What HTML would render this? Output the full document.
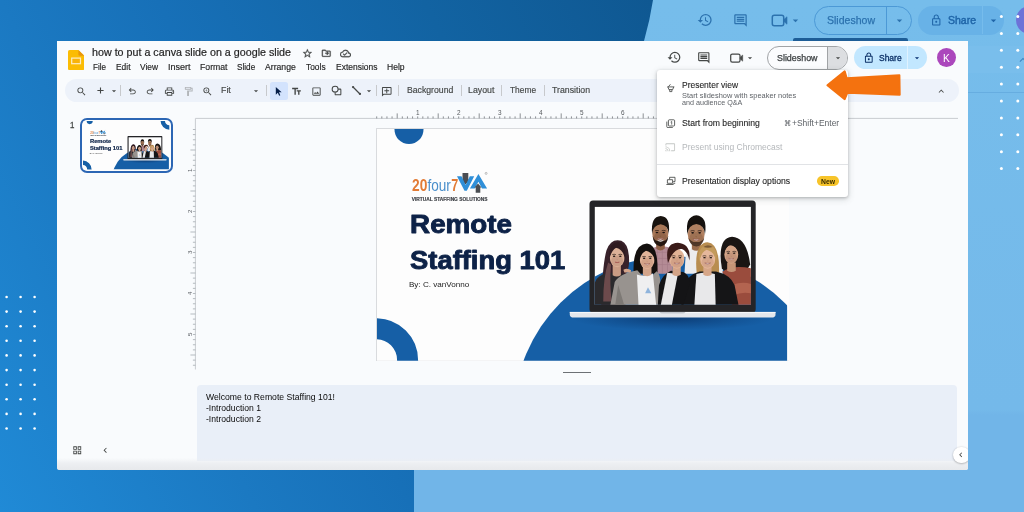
<!DOCTYPE html>
<html><head><meta charset="utf-8">
<style>
*{margin:0;padding:0;box-sizing:border-box}
html,body{width:1024px;height:512px;overflow:hidden}
body{position:relative;font-family:"Liberation Sans",sans-serif;background:#73b8ea;}
.abs{position:absolute}
.t{position:absolute;white-space:nowrap;line-height:1;transform-origin:0 0}
#bgl{left:0;top:0}
#win{left:56.6px;top:0;width:911.3px;height:470.4px;overflow:hidden;border-radius:0 0 2.5px 2.5px}#win>div#off{left:-56.6px;top:0;width:1024px;height:512px}
#winbg{left:56.6px;top:41px;width:912px;height:429.4px;background:#f9fbfd;border-radius:0 0 2.5px 2.5px}
</style></head><body><div class="abs" style="left:0;top:0;width:1024px;height:512px;will-change:transform">

<svg id="bgl" class="abs" width="1024" height="512" viewBox="0 0 1024 512">
<defs>
<linearGradient id="g1" gradientUnits="userSpaceOnUse" x1="0" y1="512" x2="724.8" y2="149.6"><stop offset="0" stop-color="#208ad6"/><stop offset="0.283" stop-color="#1b79c2"/><stop offset="0.457" stop-color="#1770b8"/><stop offset="0.75" stop-color="#1263a2"/><stop offset="1" stop-color="#0f5892"/></linearGradient>
<linearGradient id="g2" x1="0" y1="0" x2="0" y2="1"><stop offset="0" stop-color="#76bdeb"/><stop offset="0.8" stop-color="#74b9ea"/><stop offset="0.81" stop-color="#71b5e8"/><stop offset="1" stop-color="#71b5e8"/></linearGradient>
</defs>
<rect width="1024" height="512" fill="url(#g2)"/>
<path d="M0 0H653Q650 20 644 41L600 250L414 470V512H0Z" fill="url(#g1)"/>

</svg>

<div class="abs" style="left:967px;top:46px;width:80px;height:27px;background:#7fc1ed;opacity:.4"></div>
<div class="abs" style="left:967px;top:91.5px;width:57px;height:1px;background:#63a9dd;opacity:.8"></div>
<svg class="abs" style="left:1016.00px;top:53.00px" width="14" height="14" viewBox="0 0 24 24"><path fill="#3d86c0" d="M12 8l-6 6 1.410 1.410L12 10.830l4.590 4.580L18 14z" /></svg>
<svg class="abs" style="left:697.20px;top:12.20px" width="16" height="16" viewBox="0 0 24 24"><path fill="#2c72ae" d="M13 3a9 9 0 0 0-9 9H1l3.890 3.890.07.14L9 12H6c0-3.870 3.130-7 7-7s7 3.130 7 7-3.130 7-7 7c-1.930 0-3.680-.790-4.940-2.060l-1.420 1.420A8.954 8.954 0 0 0 13 21a9 9 0 0 0 0-18zm-1 5v5l4.250 2.520.770-1.280-3.520-2.090V8z" /></svg>
<svg class="abs" style="left:733.00px;top:13.10px" width="15" height="15" viewBox="0 0 24 24"><path fill="#2c72ae" d="M21.990 4c0-1.100-.890-2-1.990-2H4c-1.100 0-2 .900-2 2v12c0 1.100.900 2 2 2h14l4 4-.010-18zM20 4v13.170L18.830 16H4V4h16zM6 12h12v2H6zm0-3h12v2H6zm0-3h12v2H6z" /></svg>
<svg class="abs" style="left:770px;top:12px" width="20" height="17" viewBox="770 12 20 17"><rect x="772.300" y="15.200" width="11.400" height="10.600" rx="2" fill="none" stroke="#2c72ae" stroke-width="1.500"/><path d="M784 19.400L787 16.800V24.200L784 21.600Z" fill="#2c72ae" stroke="#2c72ae" stroke-width=".6" stroke-linejoin="round"/></svg>
<svg class="abs" style="left:789.00px;top:14.00px" width="13" height="13" viewBox="0 0 24 24"><path fill="#2c72ae" d="M7 10l5 5 5-5z" /></svg>
<div class="abs" style="left:814.4px;top:5.7px;width:97.4px;height:29px;border:1px solid #4c99d6;border-radius:14.5px"></div>
<div class="abs" style="left:886.2px;top:6px;width:1px;height:28.4px;background:#4c99d6"></div>
<span class="t" style="left:826.80px;top:15.00px;font-size:11px;color:#2c72ae;transform:scaleX(0.9573);-webkit-text-stroke:.25px #2c72ae;">Slideshow</span>
<svg class="abs" style="left:892.50px;top:14.00px" width="13" height="13" viewBox="0 0 24 24"><path fill="#2c72ae" d="M7 10l5 5 5-5z" /></svg>
<div class="abs" style="left:917.8px;top:5.7px;width:86.5px;height:29px;background:#68b2e7;border-radius:14.5px"></div>
<div class="abs" style="left:981.5px;top:6px;width:1px;height:28.4px;background:#76bcec"></div>
<svg class="abs" style="left:929.75px;top:13.75px" width="12.5" height="12.5" viewBox="0 0 24 24"><path fill="#1f65a8" d="M18 8h-1V6c0-2.760-2.240-5-5-5S7 3.240 7 6v2H6c-1.100 0-2 .900-2 2v10c0 1.100.900 2 2 2h12c1.100 0 2-.900 2-2V10c0-1.100-.900-2-2-2zM9 6c0-1.660 1.340-3 3-3s3 1.340 3 3v2H9V6zm9 14H6V10h12v10zm-6-3c1.100 0 2-.900 2-2s-.900-2-2-2-2 .900-2 2 .900 2 2 2z" /></svg>
<span class="t" style="left:947.70px;top:15.00px;font-size:11px;color:#1f65a8;transform:scaleX(0.9537);-webkit-text-stroke:.45px #1f65a8;">Share</span>
<svg class="abs" style="left:986.90px;top:14.00px" width="13" height="13" viewBox="0 0 24 24"><path fill="#1f65a8" d="M7 10l5 5 5-5z" /></svg>
<div class="abs" style="left:1016px;top:6px;width:28px;height:28px;border-radius:14px;background:#6d72d8"></div>
<div class="abs" style="left:792.5px;top:38px;width:115.2px;height:4px;background:#1d5d97;border-radius:2px 2px 0 0"></div>
<svg class="abs" style="left:0;top:0" width="1024" height="512"><g fill="#fff"><circle cx="6.6" cy="297.0" r="1.3"/><circle cx="20.6" cy="297.0" r="1.3"/><circle cx="34.6" cy="297.0" r="1.3"/><circle cx="6.6" cy="311.6" r="1.3"/><circle cx="20.6" cy="311.6" r="1.3"/><circle cx="34.6" cy="311.6" r="1.3"/><circle cx="6.6" cy="326.2" r="1.3"/><circle cx="20.6" cy="326.2" r="1.3"/><circle cx="34.6" cy="326.2" r="1.3"/><circle cx="6.6" cy="340.8" r="1.3"/><circle cx="20.6" cy="340.8" r="1.3"/><circle cx="34.6" cy="340.8" r="1.3"/><circle cx="6.6" cy="355.4" r="1.3"/><circle cx="20.6" cy="355.4" r="1.3"/><circle cx="34.6" cy="355.4" r="1.3"/><circle cx="6.6" cy="370.1" r="1.3"/><circle cx="20.6" cy="370.1" r="1.3"/><circle cx="34.6" cy="370.1" r="1.3"/><circle cx="6.6" cy="384.7" r="1.3"/><circle cx="20.6" cy="384.7" r="1.3"/><circle cx="34.6" cy="384.7" r="1.3"/><circle cx="6.6" cy="399.3" r="1.3"/><circle cx="20.6" cy="399.3" r="1.3"/><circle cx="34.6" cy="399.3" r="1.3"/><circle cx="6.6" cy="413.9" r="1.3"/><circle cx="20.6" cy="413.9" r="1.3"/><circle cx="34.6" cy="413.9" r="1.3"/><circle cx="6.6" cy="428.5" r="1.3"/><circle cx="20.6" cy="428.5" r="1.3"/><circle cx="34.6" cy="428.5" r="1.3"/><circle cx="1001.4" cy="16.5" r="1.5"/><circle cx="1017.8" cy="16.5" r="1.5"/><circle cx="1001.4" cy="33.4" r="1.5"/><circle cx="1017.8" cy="33.4" r="1.5"/><circle cx="1001.4" cy="50.3" r="1.5"/><circle cx="1017.8" cy="50.3" r="1.5"/><circle cx="1001.4" cy="67.2" r="1.5"/><circle cx="1017.8" cy="67.2" r="1.5"/><circle cx="1001.4" cy="84.1" r="1.5"/><circle cx="1017.8" cy="84.1" r="1.5"/><circle cx="1001.4" cy="101.0" r="1.5"/><circle cx="1017.8" cy="101.0" r="1.5"/><circle cx="1001.4" cy="117.9" r="1.5"/><circle cx="1017.8" cy="117.9" r="1.5"/><circle cx="1001.4" cy="134.8" r="1.5"/><circle cx="1017.8" cy="134.8" r="1.5"/><circle cx="1001.4" cy="151.7" r="1.5"/><circle cx="1017.8" cy="151.7" r="1.5"/><circle cx="1001.4" cy="168.6" r="1.5"/><circle cx="1017.8" cy="168.6" r="1.5"/></g></svg>
<div id="win" class="abs"><div id="off" class="abs"><div id="winbg" class="abs"></div>

<svg class="abs" style="left:68px;top:49.6px" width="16.2" height="20.2" viewBox="0 0 16.2 20.2"><path d="M1.6 0H10.4L16.2 5.8V18.600Q16.200 20.200 14.600 20.200H1.600Q0 20.200 0 18.600V1.600Q0 0 1.600 0Z" fill="#fbbc04"/><path d="M10.400 0L16.200 5.800H11.800Q10.400 5.800 10.400 4.400Z" fill="#e8960c"/><rect x="3.700" y="8.100" width="8.800" height="5.600" fill="#f9b30a" stroke="#fdebc0" stroke-width="1.250"/></svg>
<span class="t" style="left:91.90px;top:47.00px;font-size:10.8px;color:#1f1f1f;transform:scaleX(0.9926);-webkit-text-stroke:.2px #1f1f1f;">how to put a canva slide on a google slide</span>
<svg class="abs" style="left:302.00px;top:47.90px" width="10.8" height="10.8" viewBox="0 0 24 24"><path fill="#444746" d="M22 9.240l-7.190-.620L12 2 9.190 8.630 2 9.240l5.460 4.730L5.820 21 12 17.270 18.180 21l-1.630-7.030L22 9.240zM12 15.400l-3.760 2.270 1-4.280-3.320-2.880 4.380-.380L12 6.100l1.710 4.040 4.380.380-3.320 2.880 1 4.280L12 15.400z" stroke="#444746" stroke-width=".7"/></svg><svg class="abs" style="left:321.25px;top:48.35px" width="10.5" height="10.5" viewBox="0 0 24 24"><path fill="#444746" d="M20 6h-8l-2-2H4c-1.100 0-2 .900-2 2v12c0 1.100.900 2 2 2h16c1.100 0 2-.900 2-2V8c0-1.100-.900-2-2-2zm0 12H4V6h5.170l2 2H20v10zm-7.160-3.410L14.250 16l4-4-4-4-1.410 1.410L14.420 11H10v2h4.420l-1.580 1.590z" stroke="#444746" stroke-width=".7"/></svg><svg class="abs" style="left:340.20px;top:48.10px" width="11" height="11" viewBox="0 0 24 24"><path fill="#444746" d="M19.350 10.040A7.490 7.490 0 0 0 12 4C9.110 4 6.600 5.640 5.350 8.040A5.994 5.994 0 0 0 0 14c0 3.310 2.690 6 6 6h13c2.760 0 5-2.240 5-5 0-2.640-2.050-4.780-4.650-4.960zM19 18H6c-2.210 0-4-1.790-4-4 0-2.050 1.530-3.760 3.560-3.970l1.070-.110.500-.950A5.469 5.469 0 0 1 12 6c2.620 0 4.880 1.860 5.390 4.430l.300 1.500 1.530.110A2.980 2.980 0 0 1 22 15c0 1.650-1.350 3-3 3zm-9-3.820l-2.090-2.090L6.500 13.500 10 17l6.010-6.010-1.410-1.410z" stroke="#444746" stroke-width=".6"/></svg>
<span class="t" style="left:92.70px;top:64.00px;font-size:8.2px;color:#1f1f1f;transform:scaleX(0.9846);-webkit-text-stroke:.15px #1f1f1f;">File</span>
<span class="t" style="left:115.50px;top:64.00px;font-size:8.2px;color:#1f1f1f;transform:scaleX(1.0277);-webkit-text-stroke:.15px #1f1f1f;">Edit</span>
<span class="t" style="left:140.00px;top:64.00px;font-size:8.2px;color:#1f1f1f;transform:scaleX(1.0222);-webkit-text-stroke:.15px #1f1f1f;">View</span>
<span class="t" style="left:167.60px;top:64.00px;font-size:8.2px;color:#1f1f1f;transform:scaleX(1.0984);-webkit-text-stroke:.15px #1f1f1f;">Insert</span>
<span class="t" style="left:199.60px;top:64.00px;font-size:8.2px;color:#1f1f1f;transform:scaleX(1.0602);-webkit-text-stroke:.15px #1f1f1f;">Format</span>
<span class="t" style="left:236.80px;top:64.00px;font-size:8.2px;color:#1f1f1f;transform:scaleX(0.9990);-webkit-text-stroke:.15px #1f1f1f;">Slide</span>
<span class="t" style="left:265.20px;top:64.00px;font-size:8.2px;color:#1f1f1f;transform:scaleX(1.0569);-webkit-text-stroke:.15px #1f1f1f;">Arrange</span>
<span class="t" style="left:306.20px;top:64.00px;font-size:8.2px;color:#1f1f1f;transform:scaleX(1.0248);-webkit-text-stroke:.15px #1f1f1f;">Tools</span>
<span class="t" style="left:335.50px;top:64.00px;font-size:8.2px;color:#1f1f1f;transform:scaleX(1.0359);-webkit-text-stroke:.15px #1f1f1f;">Extensions</span>
<span class="t" style="left:386.70px;top:64.00px;font-size:8.2px;color:#1f1f1f;transform:scaleX(1.0449);-webkit-text-stroke:.15px #1f1f1f;">Help</span>
<svg class="abs" style="left:667.30px;top:50.40px" width="14.6" height="14.6" viewBox="0 0 24 24"><path fill="#444746" d="M13 3a9 9 0 0 0-9 9H1l3.890 3.890.07.14L9 12H6c0-3.870 3.130-7 7-7s7 3.130 7 7-3.130 7-7 7c-1.930 0-3.680-.790-4.940-2.060l-1.420 1.420A8.954 8.954 0 0 0 13 21a9 9 0 0 0 0-18zm-1 5v5l4.250 2.520.770-1.280-3.520-2.090V8z" /></svg>
<svg class="abs" style="left:697.30px;top:50.90px" width="13.6" height="13.6" viewBox="0 0 24 24"><path fill="#444746" d="M21.990 4c0-1.100-.890-2-1.990-2H4c-1.100 0-2 .900-2 2v12c0 1.100.900 2 2 2h14l4 4-.010-18zM20 4v13.170L18.830 16H4V4h16zM6 12h12v2H6zm0-3h12v2H6zm0-3h12v2H6z" /></svg>
<svg class="abs" style="left:729px;top:52px" width="15" height="12" viewBox="729 52 15 12"><rect x="730.700" y="54" width="9.300" height="8.200" rx="1.600" fill="none" stroke="#444746" stroke-width="1.250"/><path d="M740.200 57.200L742.700 55V61.200L740.200 59Z" fill="#444746" stroke="#444746" stroke-width=".5" stroke-linejoin="round"/></svg>
<svg class="abs" style="left:745.40px;top:53.00px" width="10" height="10" viewBox="0 0 24 24"><path fill="#444746" d="M7 10l5 5 5-5z" /></svg>
<div class="abs" style="left:766.6px;top:45.7px;width:81.8px;height:24px;border:1px solid #a0a3a6;border-radius:12px;overflow:hidden;background:#fbfcfe"><div class="abs" style="left:59.300px;top:0;width:22px;height:24px;background:#dcdee1;border-left:1px solid #a0a3a6"></div></div>
<span class="t" style="left:776.70px;top:54.00px;font-size:8.4px;color:#3c4043;transform:scaleX(1.0606);-webkit-text-stroke:.25px #3c4043;">Slideshow</span>
<svg class="abs" style="left:833.00px;top:52.80px" width="10" height="10" viewBox="0 0 24 24"><path fill="#444746" d="M7 10l5 5 5-5z" /></svg>
<div class="abs" style="left:853.8px;top:46.2px;width:73.4px;height:23px;background:#c2e7ff;border-radius:11.5px"></div>
<div class="abs" style="left:907.3px;top:46.2px;width:1px;height:23px;background:#dff2ff"></div>
<svg class="abs" style="left:863.10px;top:51.60px" width="11.6" height="11.6" viewBox="0 0 24 24"><path fill="#0a2f66" d="M18 8h-1V6c0-2.760-2.240-5-5-5S7 3.240 7 6v2H6c-1.100 0-2 .900-2 2v10c0 1.100.900 2 2 2h12c1.100 0 2-.900 2-2V10c0-1.100-.900-2-2-2zM9 6c0-1.660 1.340-3 3-3s3 1.340 3 3v2H9V6zm9 14H6V10h12v10zm-6-3c1.100 0 2-.900 2-2s-.900-2-2-2-2 .900-2 2 .900 2 2 2z" /></svg>
<span class="t" style="left:879.30px;top:54.00px;font-size:8.4px;color:#0a2f66;transform:scaleX(1.0108);-webkit-text-stroke:.3px #0a2f66;">Share</span>
<svg class="abs" style="left:912.20px;top:52.80px" width="10" height="10" viewBox="0 0 24 24"><path fill="#062e6f" d="M7 10l5 5 5-5z" /></svg>
<div class="abs" style="left:936.8px;top:48.4px;width:18.8px;height:18.8px;border-radius:50%;background:#ab47bc"></div>
<span class="t" style="left:942.80px;top:53.00px;font-size:10.5px;color:#fff;transform:scaleX(0.9693);">K</span>

<div class="abs" style="left:65.2px;top:78.9px;width:893.4px;height:23.5px;border-radius:11.75px;background:#edf2fa"></div>
<svg class="abs" style="left:75.50px;top:85.60px" width="11" height="11" viewBox="0 0 24 24"><path fill="#444746" d="M15.5 14h-.79l-.28-.27A6.471 6.471 0 0 0 16 9.5 6.5 6.5 0 1 0 9.5 16c1.61 0 3.09-.59 4.23-1.57l.27.28v.79l5 4.99L20.49 19l-4.99-5zm-6 0C7.01 14 5 11.99 5 9.5S7.01 5 9.5 5 14 7.01 14 9.5 11.99 14 9.5 14z" /></svg><svg class="abs" style="left:97.300px;top:87.300px" width="7" height="7" viewBox="0 0 7 7"><path d="M3.500 0.400V6.600M0.400 3.500H6.600" stroke="#444746" stroke-width="1.100"/></svg><svg class="abs" style="left:109.10px;top:86.10px" width="10" height="10" viewBox="0 0 24 24"><path fill="#444746" d="M7 10l5 5 5-5z" /></svg><div class="abs" style="left:120.0px;top:84.5px;width:1px;height:11.5px;background:#c7c9cc"></div>
<svg class="abs" style="left:126.55px;top:85.85px" width="10.5" height="10.5" viewBox="0 0 24 24"><path fill="#444746" d="M7 19v-2h7.1q1.575 0 2.738-1T18 13.5 16.838 11 14.1 10H7.8l2.6 2.6L9 14 4 9l5-5 1.4 1.4L7.8 8h6.3q2.425 0 4.163 1.575T20 13.5t-1.737 3.925T14.1 19z" /></svg><svg class="abs" style="left:145.25px;top:85.85px" width="10.5" height="10.5" viewBox="0 0 24 24"><path fill="#444746" d="M17 19v-2H9.9q-1.575 0-2.738-1T6 13.5 7.162 11 9.9 10h6.3l-2.600 2.600L15 14l5-5-5-5-1.400 1.400L16.200 8H9.900Q7.475 8 5.737 9.575T4 13.500t1.737 3.925T9.900 19z" /></svg><svg class="abs" style="left:164.30px;top:85.60px" width="11" height="11" viewBox="0 0 24 24"><path fill="#444746" d="M19 8h-1V3H6v5H5c-1.660 0-3 1.340-3 3v6h4v4h12v-4h4v-6c0-1.660-1.340-3-3-3zM8 5h8v3H8V5zm8 14H8v-4h8v4zm2-4v-2H6v2H4v-4c0-.550.450-1 1-1h14c.550 0 1 .450 1 1v4h-2z M17 11.500a1 1 0 1 0 2 0 1 1 0 1 0-2 0z" /></svg><svg class="abs" style="left:182.50px;top:85.60px" width="11" height="11" viewBox="0 0 24 24"><path fill="#b0b3b7" d="M18 4V3c0-.55-.45-1-1-1H5c-.55 0-1 .45-1 1v4c0 .55.45 1 1 1h12c.55 0 1-.45 1-1V6h1v4H9v11c0 .55.45 1 1 1h2c.55 0 1-.45 1-1v-9h8V4h-3zM16 6H6V4h10v2z" /></svg><svg class="abs" style="left:202.10px;top:85.60px" width="11" height="11" viewBox="0 0 24 24"><path fill="#444746" d="M15.5 14h-.79l-.28-.27A6.471 6.471 0 0 0 16 9.5 6.5 6.5 0 1 0 9.5 16c1.61 0 3.09-.59 4.23-1.57l.27.28v.79l5 4.99L20.49 19l-4.99-5zm-6 0C7.01 14 5 11.99 5 9.5S7.01 5 9.5 5 14 7.01 14 9.5 11.99 14 9.5 14zM12 10h-2v2H9v-2H7V9h2V7h1v2h2v1z" /></svg>
<span class="t" style="left:220.70px;top:87.00px;font-size:8.2px;color:#444746;transform:scaleX(1.0758);-webkit-text-stroke:.15px #444746;">Fit</span><svg class="abs" style="left:251.30px;top:86.10px" width="10" height="10" viewBox="0 0 24 24"><path fill="#444746" d="M7 10l5 5 5-5z" /></svg><div class="abs" style="left:265.9px;top:84.5px;width:1px;height:11.5px;background:#c7c9cc"></div>
<div class="abs" style="left:269.9px;top:82.2px;width:17.7px;height:17.4px;background:#d3e3fd;border-radius:2.5px"></div>
<svg class="abs" style="left:273.40px;top:86.20px" width="10.4" height="10.4" viewBox="0 0 24 24"><path fill="#041e49" d="M6.500 2.500v17.500l4.600-4.400 3.100 6.900 2.700-1.200-3.100-6.800h6.200z" /></svg><svg class="abs" style="left:291.30px;top:85.60px" width="11" height="11" viewBox="0 0 24 24"><path fill="#444746" d="M2.5 4v3h5v12h3V7h5V4h-13zm19 5h-9v3h3v7h3v-7h3V9z" /></svg><svg class="abs" style="left:310.80px;top:85.60px" width="11" height="11" viewBox="0 0 24 24"><path fill="#444746" d="M19 5v14H5V5h14m0-2H5c-1.1 0-2 .9-2 2v14c0 1.100.900 2 2 2h14c1.100 0 2-.900 2-2V5c0-1.100-.900-2-2-2zm-4.860 8.860l-3 3.870L9 13.140 6 17h12l-3.860-5.140z" /></svg>
<svg class="abs" style="left:331.3px;top:85.3px" width="11" height="11" viewBox="0 0 24 24"><circle cx="9" cy="9" r="6.500" fill="none" stroke="#444746" stroke-width="2.200"/><path d="M15.500 9H20Q21.500 9 21.500 10.500V20Q21.500 21.500 20 21.500H10.500Q9 21.500 9 20V15.500" fill="none" stroke="#444746" stroke-width="2.200"/></svg>
<svg class="abs" style="left:350.7px;top:85.3px" width="11" height="11" viewBox="0 0 24 24"><path d="M5 5L19 19" stroke="#444746" stroke-width="2.600"/><circle cx="4.500" cy="4.500" r="2.500" fill="#444746"/><circle cx="19.500" cy="19.500" r="2.500" fill="#444746"/></svg>
<svg class="abs" style="left:364.10px;top:86.10px" width="10" height="10" viewBox="0 0 24 24"><path fill="#444746" d="M7 10l5 5 5-5z" /></svg><div class="abs" style="left:375.6px;top:84.5px;width:1px;height:11.5px;background:#c7c9cc"></div><svg class="abs" style="left:381.25px;top:85.65px" width="11.5" height="11.5" viewBox="0 0 24 24"><path fill="#444746" d="M22 4c0-1.100-.900-2-2-2H4c-1.100 0-2 .900-2 2v12c0 1.100.900 2 2 2h14l4 4V4zm-2 13.170L18.830 16H4V4h16v13.170zM13 5h-2v4H7v2h4v4h2v-4h4V9h-4z" transform="translate(24 0) scale(-1 1)"/></svg><div class="abs" style="left:397.9px;top:84.5px;width:1px;height:11.5px;background:#c7c9cc"></div>
<span class="t" style="left:406.90px;top:87.00px;font-size:8.2px;color:#444746;transform:scaleX(1.0594);-webkit-text-stroke:.15px #444746;">Background</span><div class="abs" style="left:460.9px;top:84.5px;width:1px;height:11.5px;background:#c7c9cc"></div>
<span class="t" style="left:468.40px;top:87.00px;font-size:8.2px;color:#444746;transform:scaleX(1.0734);-webkit-text-stroke:.15px #444746;">Layout</span><div class="abs" style="left:501.0px;top:84.5px;width:1px;height:11.5px;background:#c7c9cc"></div>
<span class="t" style="left:509.70px;top:87.00px;font-size:8.2px;color:#444746;transform:scaleX(1.0242);-webkit-text-stroke:.15px #444746;">Theme</span><div class="abs" style="left:544.1px;top:84.5px;width:1px;height:11.5px;background:#c7c9cc"></div>
<span class="t" style="left:552.20px;top:87.00px;font-size:8.2px;color:#444746;transform:scaleX(1.0685);-webkit-text-stroke:.15px #444746;">Transition</span>
<svg class="abs" style="left:936.45px;top:85.75px" width="10.5" height="10.5" viewBox="0 0 24 24"><path fill="#444746" d="M12 8l-6 6 1.410 1.410L12 10.830l4.590 4.580L18 14z" /></svg>

<span class="t" style="left:70.40px;top:121.00px;font-size:8.8px;color:#444746;transform:scaleX(0.8968);-webkit-text-stroke:.3px #444746;">1</span>
<div class="abs" style="left:80px;top:118.4px;width:93px;height:54.4px;border:2px solid #2c66b4;border-radius:7px;background:#fdfdfd;overflow:hidden">
<svg class="abs" style="left:1.3px;top:0.7px" width="86.3" height="48.5" viewBox="376.5 129 412 231.75" preserveAspectRatio="none">
<defs><clipPath id="tc"><rect x="376.5" y="129" width="412" height="231.75"/></clipPath>
<clipPath id="tb"><rect x="500" y="250" width="286.600" height="111"/></clipPath>
<clipPath id="ts"><rect x="594.3" y="206.9" width="156.1" height="97.800"/></clipPath>
<radialGradient id="tsh" cx="0.5" cy="0.5" r="0.5"><stop offset="0" stop-color="#0b3a72" stop-opacity=".9"/><stop offset="1" stop-color="#0c3f7a" stop-opacity="0"/></radialGradient></defs>
<rect x="376.5" y="129" width="412" height="231.75" fill="#fdfdfd"/>
<g clip-path="url(#tc)">
<circle cx="408.5" cy="129.5" r="14.5" fill="#165fa6"/>
<circle cx="375.600" cy="360.200" r="31.500" fill="none" stroke="#165fa6" stroke-width="21"/>
<circle cx="789" cy="128.500" r="31.500" fill="none" stroke="#165fa6" stroke-width="21"/>
<path d="M513 361V256H786.600V361Z" fill="none"/><g clip-path="url(#tb)"><circle cx="672" cy="414.7" r="158.4" fill="#165fa6"/>
<ellipse cx="672" cy="318.500" rx="100" ry="12" fill="url(#tsh)"/></g>
</g>

<rect x="589" y="200.400" width="166.200" height="112" rx="3.500" fill="#242427"/>
<rect x="594.300" y="206.900" width="156.100" height="97.800" fill="#fff"/>
<g clip-path="url(#ts)">
<circle cx="672" cy="414.700" r="158.400" fill="#165fa6"/>
<g transform="translate(590 203) scale(0.2053)">
<!-- man 1 -->
<path d="M298 222Q340 200 398 222L400 345H310Z" fill="#b48b95"/>
<path d="M310 240H398M310 270H398M310 300H398M325 215V345M350 215V345M375 215V345" stroke="#9a6f7c" stroke-width="3" opacity=".6"/>
<path d="M320 185H362V222Q340 240 320 222Z" fill="#8f6146"/>
<ellipse cx="340" cy="150" rx="39" ry="52" fill="#a87757"/><ellipse cx="340" cy="168.2" rx="31.200000000000003" ry="28.6" fill="#6b4630" opacity=".35"/><ellipse cx="323.62" cy="143.76" rx="6.630000000000001" ry="3.6400000000000006" fill="#1d1412"/><ellipse cx="356.38" cy="143.76" rx="6.630000000000001" ry="3.6400000000000006" fill="#1d1412"/><path d="M313.87 135.44Q323.62 131.28 333.37 135.44M346.63 135.44Q356.38 131.28 366.13 135.44" stroke="#2a1c16" stroke-width="3.51" fill="none"/><path d="M325.18 171.84Q340 187.44 354.82 171.84Q340 176.0 325.18 171.84Z" fill="#f4efec" stroke="#8e4a44" stroke-width="2.34"/><path d="M336.88 160.4Q340 164.04 343.9 160.4" stroke="#6b4630" stroke-width="2.7300000000000004" fill="none" opacity=".7"/>
<path d="M300 150Q292 66 342 63Q392 66 381 150Q378 108 342 104Q306 108 300 150Z" fill="#18130f"/>
<path d="M303 160Q306 208 341 212Q376 208 379 160Q370 186 356 184Q341 178 326 184Q312 186 303 160Z" fill="#241710"/>
<path d="M322 178Q341 200 360 178Q341 188 322 178Z" fill="#efe9e4"/>
<!-- woman 1 -->
<path d="M52 500Q58 300 78 230Q100 170 150 184Q190 200 188 290Q186 340 160 360L150 500Z" fill="#38222a"/>
<path d="M20 500V390Q30 350 90 340L160 345Q180 360 170 500Z" fill="#2b2a2d"/>
<path d="M108 300H148V352Q128 365 108 352Z" fill="#c99c84"/>
<ellipse cx="130" cy="265" rx="36" ry="48" fill="#dcb198"/><ellipse cx="130" cy="281.8" rx="28.8" ry="26.400000000000002" fill="#a97b66" opacity=".35"/><ellipse cx="114.88" cy="259.24" rx="6.12" ry="3.3600000000000003" fill="#1d1412"/><ellipse cx="145.12" cy="259.24" rx="6.12" ry="3.3600000000000003" fill="#1d1412"/><path d="M105.88 251.56Q114.88 247.72 123.88 251.56M136.12 251.56Q145.12 247.72 154.12 251.56" stroke="#2a1c16" stroke-width="3.2399999999999998" fill="none"/><path d="M119.2 288.04Q130 291.88 140.8 288.04" stroke="#a0504c" stroke-width="4.32" fill="none"/><path d="M127.12 274.6Q130 277.96 133.6 274.6" stroke="#a97b66" stroke-width="2.5200000000000005" fill="none" opacity=".7"/>
<path d="M92 275Q82 195 135 190Q180 196 168 275Q160 225 125 218Q100 232 92 275Z" fill="#2f1b20"/>
<path d="M62 480Q62 360 86 290L100 300Q92 400 104 480Z" fill="#6c4a4c"/>
<!-- woman 2 -->
<path d="M210 345Q204 200 275 197Q332 202 326 345Z" fill="#14100e"/>
<path d="M96 500L118 385Q140 345 228 328L250 352H302L322 332Q338 345 340 380V500Z" fill="#98938f"/>
<path d="M120 500L135 400L165 500Z" fill="#7d7975"/>
<path d="M226 348Q265 362 304 344L320 500H234Z" fill="#efeff0"/>
<path d="M280 410L296 440H266Z" fill="#8fb4dc"/>
<path d="M255 312H297V350Q276 364 255 350Z" fill="#d3a58b"/>
<ellipse cx="276" cy="275" rx="36" ry="47" fill="#e2b499"/><ellipse cx="276" cy="291.45" rx="28.8" ry="25.85" fill="#b5826b" opacity=".35"/><ellipse cx="260.88" cy="269.36" rx="6.12" ry="3.2900000000000005" fill="#1d1412"/><ellipse cx="291.12" cy="269.36" rx="6.12" ry="3.2900000000000005" fill="#1d1412"/><path d="M251.88 261.84Q260.88 258.08 269.88 261.84M282.12 261.84Q291.12 258.08 300.12 261.84" stroke="#2a1c16" stroke-width="3.2399999999999998" fill="none"/><path d="M262.32 294.74Q276 308.84 289.68 294.74Q276 298.5 262.32 294.74Z" fill="#f4efec" stroke="#8e4a44" stroke-width="2.16"/><path d="M273.12 284.4Q276 287.69 279.6 284.4" stroke="#b5826b" stroke-width="2.5200000000000005" fill="none" opacity=".7"/>
<path d="M238 285Q228 212 278 210Q322 214 314 285Q308 240 270 232Q244 244 238 285Z" fill="#14100e"/>
<path d="M160 325Q180 315 198 328L195 338H165Z" fill="#d3a58b"/>
</g>
<g transform="translate(670 203) scale(0.2053)">
<!-- man 2 -->
<path d="M68 345L74 250Q92 222 125 215Q160 220 185 238L255 262V345Z" fill="#ececee"/>
<path d="M104 188H148V225Q126 240 104 225Z" fill="#9a6c4c"/>
<ellipse cx="125" cy="152" rx="41" ry="55" fill="#b18161"/><ellipse cx="125" cy="171.25" rx="32.800000000000004" ry="30.250000000000004" fill="#7a5238" opacity=".35"/><ellipse cx="107.78" cy="145.4" rx="6.970000000000001" ry="3.8500000000000005" fill="#1d1412"/><ellipse cx="142.22" cy="145.4" rx="6.970000000000001" ry="3.8500000000000005" fill="#1d1412"/><path d="M97.53 136.6Q107.78 132.2 118.03 136.6M131.97 136.6Q142.22 132.2 152.47 136.6" stroke="#2a1c16" stroke-width="3.69" fill="none"/><path d="M109.42 175.1Q125 191.6 140.58 175.1Q125 179.5 109.42 175.1Z" fill="#f4efec" stroke="#8e4a44" stroke-width="2.46"/><path d="M121.72 163.0Q125 166.85 129.1 163.0" stroke="#7a5238" stroke-width="2.87" fill="none" opacity=".7"/>
<path d="M82 152Q70 66 126 60Q182 66 168 152Q166 108 126 102Q88 106 82 152Z" fill="#15110e"/>
<path d="M88 170Q94 208 126 212Q158 208 164 170Q150 192 126 190Q102 192 88 170Z" fill="#3b281c" opacity=".8"/>
<!-- woman 5 -->
<path d="M250 318Q226 170 300 164Q372 168 388 300L370 330H262Z" fill="#1a1513"/>
<path d="M252 335Q300 300 392 318V500H300Q290 400 252 335Z" fill="#9a4c3d"/>
<path d="M300 400Q350 380 392 395V440Q350 430 305 450Z" fill="#b36450"/>
<path d="M276 290H318V330Q297 342 276 330Z" fill="#c59476"/>
<ellipse cx="296" cy="250" rx="34" ry="46" fill="#d4a487"/><ellipse cx="296" cy="266.1" rx="27.200000000000003" ry="25.3" fill="#a57860" opacity=".35"/><ellipse cx="281.72" cy="244.48" rx="5.78" ry="3.22" fill="#1d1412"/><ellipse cx="310.28" cy="244.48" rx="5.78" ry="3.22" fill="#1d1412"/><path d="M273.22 237.12Q281.72 233.44 290.22 237.12M301.78 237.12Q310.28 233.44 318.78 237.12" stroke="#2a1c16" stroke-width="3.06" fill="none"/><path d="M283.08 269.32Q296 283.12 308.92 269.32Q296 273.0 283.08 269.32Z" fill="#f4efec" stroke="#8e4a44" stroke-width="2.04"/><path d="M293.28 259.2Q296 262.42 299.4 259.2" stroke="#a57860" stroke-width="2.3800000000000003" fill="none" opacity=".7"/>
<path d="M260 252Q254 182 300 180Q340 186 334 250Q322 206 288 204Q266 216 260 252Z" fill="#1a1513"/>
<path d="M268 238H290M302 238H324" stroke="#6b5a50" stroke-width="2.500" opacity=".7"/>
<!-- woman 4 -->
<path d="M128 345Q112 196 180 191Q242 196 236 345Z" fill="#b88d50"/>
<path d="M52 500L68 400Q86 350 142 334H222Q292 350 312 400L332 500Z" fill="#151517"/>
<path d="M126 346Q170 330 216 346L220 500H116Z" fill="#e8e8ea"/>
<path d="M160 312H200V350Q180 362 160 350Z" fill="#d6a688"/>
<ellipse cx="181" cy="272" rx="37" ry="48" fill="#e5b79b"/><ellipse cx="181" cy="288.8" rx="29.6" ry="26.400000000000002" fill="#b8866d" opacity=".35"/><ellipse cx="165.46" cy="266.24" rx="6.29" ry="3.3600000000000003" fill="#1d1412"/><ellipse cx="196.54" cy="266.24" rx="6.29" ry="3.3600000000000003" fill="#1d1412"/><path d="M156.21 258.56Q165.46 254.72 174.71 258.56M187.29 258.56Q196.54 254.72 205.79 258.56" stroke="#2a1c16" stroke-width="3.33" fill="none"/><path d="M166.94 292.16Q181 306.56 195.06 292.16Q181 296.0 166.94 292.16Z" fill="#f4efec" stroke="#8e4a44" stroke-width="2.2199999999999998"/><path d="M178.04 281.6Q181 284.96 184.7 281.6" stroke="#b8866d" stroke-width="2.5900000000000003" fill="none" opacity=".7"/>
<path d="M140 290Q126 210 182 204Q236 210 222 290Q218 238 176 228Q148 240 140 290Z" fill="#c39a5c"/>
<path d="M160 214Q182 198 206 214Q182 222 160 214Z" fill="#7a5a36"/>
<!-- woman 3 -->
<path d="M-62 500L-56 400Q-40 348 2 330L62 336Q98 352 92 400L62 500Z" fill="#141416"/>
<path d="M-16 340L36 346L6 500H-48Z" fill="#e9e9ea"/>
<path d="M10 312H50V350Q30 362 10 350Z" fill="#d3a488"/>
<ellipse cx="31" cy="272" rx="37" ry="48" fill="#e2b396"/><ellipse cx="31" cy="288.8" rx="29.6" ry="26.400000000000002" fill="#b4826b" opacity=".35"/><ellipse cx="15.46" cy="266.24" rx="6.29" ry="3.3600000000000003" fill="#1d1412"/><ellipse cx="46.54" cy="266.24" rx="6.29" ry="3.3600000000000003" fill="#1d1412"/><path d="M6.210000000000001 258.56Q15.46 254.72 24.71 258.56M37.29 258.56Q46.54 254.72 55.79 258.56" stroke="#2a1c16" stroke-width="3.33" fill="none"/><path d="M16.939999999999998 292.16Q31 306.56 45.06 292.16Q31 296.0 16.939999999999998 292.16Z" fill="#f4efec" stroke="#8e4a44" stroke-width="2.2199999999999998"/><path d="M28.04 281.6Q31 284.96 34.7 281.6" stroke="#b4826b" stroke-width="2.5900000000000003" fill="none" opacity=".7"/>
<path d="M-12 292Q-32 196 36 194Q102 200 92 280Q84 236 56 224Q16 218 -12 292Z" fill="#3a1b18"/>
</g>
</g>
<path d="M569.300 311.900H775V314.800Q775 317.600 771 317.600H573.300Q569.300 317.600 569.300 314.800Z" fill="#e4e7ec"/>
<rect x="569.300" y="311.900" width="205.700" height="1.200" fill="#f6f7f9"/>
<path d="M659 311.900H685Q684 313.600 682 313.600H662Q660 313.600 659 311.900Z" fill="#c3c7cd"/>


<g font-family="Liberation Sans" >
<text x="411.5" y="190.5" font-size="16.4" font-weight="700" fill="#e27b35" textLength="15.3" lengthAdjust="spacingAndGlyphs">20</text>
<text x="427" y="190.5" font-size="16.4" fill="#4a8fcb" textLength="23.4" lengthAdjust="spacingAndGlyphs">four</text>
<text x="450.8" y="190.5" font-size="16.4" font-weight="700" fill="#e27b35" textLength="7" lengthAdjust="spacingAndGlyphs">7</text>
<path d="M462 173H467.800V179.500H470L464.900 184.500 459.800 179.500H462Z" fill="#4a4d52"/>
<path d="M456.500 176.300H461L465.200 185 469.300 176.300H473.700L466.300 190.800H464Z" fill="#2f8fd8"/>
<path d="M477.900 173.900L486.600 188.400H481.500L477.900 181.800 474.200 188.400H469.400Z" fill="#2f8fd8"/>
<path d="M477.500 183.500L481 187.500H479.800V192.800H475.200V187.500H474Z" fill="#4a4d52"/>
<circle cx="485.600" cy="173.400" r="1" fill="none" stroke="#666" stroke-width=".4"/>
<text x="411.300" y="201.100" font-size="4.500" font-weight="700" fill="#3c3f44" stroke="#3c3f44" stroke-width=".15" textLength="75.700" lengthAdjust="spacingAndGlyphs">VIRTUAL STAFFING SOLUTIONS</text>
<text x="409.600" y="232.800" font-size="25.400" font-weight="700" fill="#0d2247" stroke="#0d2247" stroke-width=".9" stroke-linejoin="round" textLength="101.900" lengthAdjust="spacingAndGlyphs">Remote</text>
<text x="409.600" y="269.400" font-size="25.400" font-weight="700" fill="#0d2247" stroke="#0d2247" stroke-width=".9" stroke-linejoin="round" textLength="155" lengthAdjust="spacingAndGlyphs">Staffing 101</text>
<text x="408.400" y="287.300" font-size="7.400" fill="#222" textLength="60.500" lengthAdjust="spacingAndGlyphs">By: C. vanVonno</text>
</g>

</svg>
</div>

<svg class="abs" style="left:0;top:0" width="1024" height="512" viewBox="0 0 1024 512"><path d="M195.4 369.5V118.4H958" fill="none" stroke="#c9ccd1" stroke-width="1"/><path d="M376.70 116.4V118.4M381.82 116.4V118.4M386.95 116.4V118.4M392.07 116.4V118.4M397.20 113.4V118.4M402.32 116.4V118.4M407.45 116.4V118.4M412.57 116.4V118.4M417.70 116.4V118.4M422.82 116.4V118.4M427.95 116.4V118.4M433.07 116.4V118.4M438.20 113.4V118.4M443.32 116.4V118.4M448.45 116.4V118.4M453.57 116.4V118.4M458.70 116.4V118.4M463.82 116.4V118.4M468.95 116.4V118.4M474.07 116.4V118.4M479.20 113.4V118.4M484.32 116.4V118.4M489.45 116.4V118.4M494.57 116.4V118.4M499.70 116.4V118.4M504.82 116.4V118.4M509.95 116.4V118.4M515.08 116.4V118.4M520.20 113.4V118.4M525.33 116.4V118.4M530.45 116.4V118.4M535.58 116.4V118.4M540.70 116.4V118.4M545.83 116.4V118.4M550.95 116.4V118.4M556.08 116.4V118.4M561.20 113.4V118.4M566.33 116.4V118.4M571.45 116.4V118.4M576.58 116.4V118.4M581.70 116.4V118.4M586.83 116.4V118.4M591.95 116.4V118.4M597.08 116.4V118.4M602.20 113.4V118.4M607.33 116.4V118.4M612.45 116.4V118.4M617.58 116.4V118.4M622.70 116.4V118.4M627.83 116.4V118.4M632.95 116.4V118.4M638.08 116.4V118.4M643.20 113.4V118.4M648.33 116.4V118.4M653.45 116.4V118.4M658.58 116.4V118.4M663.70 116.4V118.4M668.83 116.4V118.4M673.95 116.4V118.4M679.08 116.4V118.4M684.20 113.4V118.4M689.33 116.4V118.4M694.45 116.4V118.4M699.58 116.4V118.4M704.70 116.4V118.4M709.83 116.4V118.4M714.95 116.4V118.4M720.08 116.4V118.4M725.20 113.4V118.4M730.33 116.4V118.4M735.45 116.4V118.4M740.58 116.4V118.4M745.70 116.4V118.4M750.83 116.4V118.4M755.95 116.4V118.4M761.08 116.4V118.4M766.20 113.4V118.4M771.33 116.4V118.4M776.45 116.4V118.4M781.58 116.4V118.4M786.70 116.4V118.4" stroke="#5f6368" stroke-width="0.7" fill="none"/><path d="M192.9 129.50H195.4M192.9 134.62H195.4M192.9 139.75H195.4M192.9 144.88H195.4M190.4 150.00H195.4M192.9 155.12H195.4M192.9 160.25H195.4M192.9 165.38H195.4M192.9 170.50H195.4M192.9 175.62H195.4M192.9 180.75H195.4M192.9 185.88H195.4M190.4 191.00H195.4M192.9 196.12H195.4M192.9 201.25H195.4M192.9 206.38H195.4M192.9 211.50H195.4M192.9 216.62H195.4M192.9 221.75H195.4M192.9 226.88H195.4M190.4 232.00H195.4M192.9 237.12H195.4M192.9 242.25H195.4M192.9 247.38H195.4M192.9 252.50H195.4M192.9 257.62H195.4M192.9 262.75H195.4M192.9 267.88H195.4M190.4 273.00H195.4M192.9 278.12H195.4M192.9 283.25H195.4M192.9 288.38H195.4M192.9 293.50H195.4M192.9 298.62H195.4M192.9 303.75H195.4M192.9 308.88H195.4M190.4 314.00H195.4M192.9 319.12H195.4M192.9 324.25H195.4M192.9 329.38H195.4M192.9 334.50H195.4M192.9 339.62H195.4M192.9 344.75H195.4M192.9 349.88H195.4M190.4 355.00H195.4M192.9 360.12H195.4M192.9 365.25H195.4" stroke="#9aa0a6" stroke-width="0.7" fill="none"/></svg><span class="t" style="left:416.00px;top:110.00px;font-size:6.4px;color:#55595d;">1</span><span class="t" style="left:457.00px;top:110.00px;font-size:6.4px;color:#55595d;">2</span><span class="t" style="left:498.00px;top:110.00px;font-size:6.4px;color:#55595d;">3</span><span class="t" style="left:539.00px;top:110.00px;font-size:6.4px;color:#55595d;">4</span><span class="t" style="left:580.00px;top:110.00px;font-size:6.4px;color:#55595d;">5</span><span class="t" style="left:621.00px;top:110.00px;font-size:6.4px;color:#55595d;">6</span><span class="t" style="left:662.00px;top:110.00px;font-size:6.4px;color:#55595d;">7</span><span class="t" style="left:703.00px;top:110.00px;font-size:6.4px;color:#55595d;">8</span><span class="t" style="left:744.00px;top:110.00px;font-size:6.4px;color:#55595d;">9</span><span class="t" style="left:186.5px;top:172.3px;font-size:6.2px;color:#5f6368;transform:rotate(-90deg)">1</span><span class="t" style="left:186.5px;top:213.3px;font-size:6.2px;color:#5f6368;transform:rotate(-90deg)">2</span><span class="t" style="left:186.5px;top:254.3px;font-size:6.2px;color:#5f6368;transform:rotate(-90deg)">3</span><span class="t" style="left:186.5px;top:295.3px;font-size:6.2px;color:#5f6368;transform:rotate(-90deg)">4</span><span class="t" style="left:186.5px;top:336.3px;font-size:6.2px;color:#5f6368;transform:rotate(-90deg)">5</span><div class="abs" style="left:375.7px;top:128.2px;width:413.6px;height:233.3px;background:#d9dbde"></div><svg class="abs" style="left:376.5px;top:129px" width="412" height="231.75" viewBox="376.5 129 412 231.75" preserveAspectRatio="none">
<defs><clipPath id="mc"><rect x="376.5" y="129" width="412" height="231.75"/></clipPath>
<clipPath id="mb"><rect x="500" y="250" width="286.600" height="111"/></clipPath>
<clipPath id="ms"><rect x="594.3" y="206.9" width="156.1" height="97.800"/></clipPath>
<radialGradient id="msh" cx="0.5" cy="0.5" r="0.5"><stop offset="0" stop-color="#0b3a72" stop-opacity=".9"/><stop offset="1" stop-color="#0c3f7a" stop-opacity="0"/></radialGradient></defs>
<rect x="376.5" y="129" width="412" height="231.75" fill="#fdfdfd"/>
<g clip-path="url(#mc)">
<circle cx="408.5" cy="129.5" r="14.5" fill="#165fa6"/>
<circle cx="375.600" cy="360.200" r="31.500" fill="none" stroke="#165fa6" stroke-width="21"/>
<circle cx="789" cy="128.500" r="31.500" fill="none" stroke="#165fa6" stroke-width="21"/>
<path d="M513 361V256H786.600V361Z" fill="none"/><g clip-path="url(#mb)"><circle cx="672" cy="414.7" r="158.4" fill="#165fa6"/>
<ellipse cx="672" cy="318.500" rx="100" ry="12" fill="url(#msh)"/></g>
</g>

<rect x="589" y="200.400" width="166.200" height="112" rx="3.500" fill="#242427"/>
<rect x="594.300" y="206.900" width="156.100" height="97.800" fill="#fff"/>
<g clip-path="url(#ms)">
<circle cx="672" cy="414.700" r="158.400" fill="#165fa6"/>
<g transform="translate(590 203) scale(0.2053)">
<!-- man 1 -->
<path d="M298 222Q340 200 398 222L400 345H310Z" fill="#b48b95"/>
<path d="M310 240H398M310 270H398M310 300H398M325 215V345M350 215V345M375 215V345" stroke="#9a6f7c" stroke-width="3" opacity=".6"/>
<path d="M320 185H362V222Q340 240 320 222Z" fill="#8f6146"/>
<ellipse cx="340" cy="150" rx="39" ry="52" fill="#a87757"/><ellipse cx="340" cy="168.2" rx="31.200000000000003" ry="28.6" fill="#6b4630" opacity=".35"/><ellipse cx="323.62" cy="143.76" rx="6.630000000000001" ry="3.6400000000000006" fill="#1d1412"/><ellipse cx="356.38" cy="143.76" rx="6.630000000000001" ry="3.6400000000000006" fill="#1d1412"/><path d="M313.87 135.44Q323.62 131.28 333.37 135.44M346.63 135.44Q356.38 131.28 366.13 135.44" stroke="#2a1c16" stroke-width="3.51" fill="none"/><path d="M325.18 171.84Q340 187.44 354.82 171.84Q340 176.0 325.18 171.84Z" fill="#f4efec" stroke="#8e4a44" stroke-width="2.34"/><path d="M336.88 160.4Q340 164.04 343.9 160.4" stroke="#6b4630" stroke-width="2.7300000000000004" fill="none" opacity=".7"/>
<path d="M300 150Q292 66 342 63Q392 66 381 150Q378 108 342 104Q306 108 300 150Z" fill="#18130f"/>
<path d="M303 160Q306 208 341 212Q376 208 379 160Q370 186 356 184Q341 178 326 184Q312 186 303 160Z" fill="#241710"/>
<path d="M322 178Q341 200 360 178Q341 188 322 178Z" fill="#efe9e4"/>
<!-- woman 1 -->
<path d="M52 500Q58 300 78 230Q100 170 150 184Q190 200 188 290Q186 340 160 360L150 500Z" fill="#38222a"/>
<path d="M20 500V390Q30 350 90 340L160 345Q180 360 170 500Z" fill="#2b2a2d"/>
<path d="M108 300H148V352Q128 365 108 352Z" fill="#c99c84"/>
<ellipse cx="130" cy="265" rx="36" ry="48" fill="#dcb198"/><ellipse cx="130" cy="281.8" rx="28.8" ry="26.400000000000002" fill="#a97b66" opacity=".35"/><ellipse cx="114.88" cy="259.24" rx="6.12" ry="3.3600000000000003" fill="#1d1412"/><ellipse cx="145.12" cy="259.24" rx="6.12" ry="3.3600000000000003" fill="#1d1412"/><path d="M105.88 251.56Q114.88 247.72 123.88 251.56M136.12 251.56Q145.12 247.72 154.12 251.56" stroke="#2a1c16" stroke-width="3.2399999999999998" fill="none"/><path d="M119.2 288.04Q130 291.88 140.8 288.04" stroke="#a0504c" stroke-width="4.32" fill="none"/><path d="M127.12 274.6Q130 277.96 133.6 274.6" stroke="#a97b66" stroke-width="2.5200000000000005" fill="none" opacity=".7"/>
<path d="M92 275Q82 195 135 190Q180 196 168 275Q160 225 125 218Q100 232 92 275Z" fill="#2f1b20"/>
<path d="M62 480Q62 360 86 290L100 300Q92 400 104 480Z" fill="#6c4a4c"/>
<!-- woman 2 -->
<path d="M210 345Q204 200 275 197Q332 202 326 345Z" fill="#14100e"/>
<path d="M96 500L118 385Q140 345 228 328L250 352H302L322 332Q338 345 340 380V500Z" fill="#98938f"/>
<path d="M120 500L135 400L165 500Z" fill="#7d7975"/>
<path d="M226 348Q265 362 304 344L320 500H234Z" fill="#efeff0"/>
<path d="M280 410L296 440H266Z" fill="#8fb4dc"/>
<path d="M255 312H297V350Q276 364 255 350Z" fill="#d3a58b"/>
<ellipse cx="276" cy="275" rx="36" ry="47" fill="#e2b499"/><ellipse cx="276" cy="291.45" rx="28.8" ry="25.85" fill="#b5826b" opacity=".35"/><ellipse cx="260.88" cy="269.36" rx="6.12" ry="3.2900000000000005" fill="#1d1412"/><ellipse cx="291.12" cy="269.36" rx="6.12" ry="3.2900000000000005" fill="#1d1412"/><path d="M251.88 261.84Q260.88 258.08 269.88 261.84M282.12 261.84Q291.12 258.08 300.12 261.84" stroke="#2a1c16" stroke-width="3.2399999999999998" fill="none"/><path d="M262.32 294.74Q276 308.84 289.68 294.74Q276 298.5 262.32 294.74Z" fill="#f4efec" stroke="#8e4a44" stroke-width="2.16"/><path d="M273.12 284.4Q276 287.69 279.6 284.4" stroke="#b5826b" stroke-width="2.5200000000000005" fill="none" opacity=".7"/>
<path d="M238 285Q228 212 278 210Q322 214 314 285Q308 240 270 232Q244 244 238 285Z" fill="#14100e"/>
<path d="M160 325Q180 315 198 328L195 338H165Z" fill="#d3a58b"/>
</g>
<g transform="translate(670 203) scale(0.2053)">
<!-- man 2 -->
<path d="M68 345L74 250Q92 222 125 215Q160 220 185 238L255 262V345Z" fill="#ececee"/>
<path d="M104 188H148V225Q126 240 104 225Z" fill="#9a6c4c"/>
<ellipse cx="125" cy="152" rx="41" ry="55" fill="#b18161"/><ellipse cx="125" cy="171.25" rx="32.800000000000004" ry="30.250000000000004" fill="#7a5238" opacity=".35"/><ellipse cx="107.78" cy="145.4" rx="6.970000000000001" ry="3.8500000000000005" fill="#1d1412"/><ellipse cx="142.22" cy="145.4" rx="6.970000000000001" ry="3.8500000000000005" fill="#1d1412"/><path d="M97.53 136.6Q107.78 132.2 118.03 136.6M131.97 136.6Q142.22 132.2 152.47 136.6" stroke="#2a1c16" stroke-width="3.69" fill="none"/><path d="M109.42 175.1Q125 191.6 140.58 175.1Q125 179.5 109.42 175.1Z" fill="#f4efec" stroke="#8e4a44" stroke-width="2.46"/><path d="M121.72 163.0Q125 166.85 129.1 163.0" stroke="#7a5238" stroke-width="2.87" fill="none" opacity=".7"/>
<path d="M82 152Q70 66 126 60Q182 66 168 152Q166 108 126 102Q88 106 82 152Z" fill="#15110e"/>
<path d="M88 170Q94 208 126 212Q158 208 164 170Q150 192 126 190Q102 192 88 170Z" fill="#3b281c" opacity=".8"/>
<!-- woman 5 -->
<path d="M250 318Q226 170 300 164Q372 168 388 300L370 330H262Z" fill="#1a1513"/>
<path d="M252 335Q300 300 392 318V500H300Q290 400 252 335Z" fill="#9a4c3d"/>
<path d="M300 400Q350 380 392 395V440Q350 430 305 450Z" fill="#b36450"/>
<path d="M276 290H318V330Q297 342 276 330Z" fill="#c59476"/>
<ellipse cx="296" cy="250" rx="34" ry="46" fill="#d4a487"/><ellipse cx="296" cy="266.1" rx="27.200000000000003" ry="25.3" fill="#a57860" opacity=".35"/><ellipse cx="281.72" cy="244.48" rx="5.78" ry="3.22" fill="#1d1412"/><ellipse cx="310.28" cy="244.48" rx="5.78" ry="3.22" fill="#1d1412"/><path d="M273.22 237.12Q281.72 233.44 290.22 237.12M301.78 237.12Q310.28 233.44 318.78 237.12" stroke="#2a1c16" stroke-width="3.06" fill="none"/><path d="M283.08 269.32Q296 283.12 308.92 269.32Q296 273.0 283.08 269.32Z" fill="#f4efec" stroke="#8e4a44" stroke-width="2.04"/><path d="M293.28 259.2Q296 262.42 299.4 259.2" stroke="#a57860" stroke-width="2.3800000000000003" fill="none" opacity=".7"/>
<path d="M260 252Q254 182 300 180Q340 186 334 250Q322 206 288 204Q266 216 260 252Z" fill="#1a1513"/>
<path d="M268 238H290M302 238H324" stroke="#6b5a50" stroke-width="2.500" opacity=".7"/>
<!-- woman 4 -->
<path d="M128 345Q112 196 180 191Q242 196 236 345Z" fill="#b88d50"/>
<path d="M52 500L68 400Q86 350 142 334H222Q292 350 312 400L332 500Z" fill="#151517"/>
<path d="M126 346Q170 330 216 346L220 500H116Z" fill="#e8e8ea"/>
<path d="M160 312H200V350Q180 362 160 350Z" fill="#d6a688"/>
<ellipse cx="181" cy="272" rx="37" ry="48" fill="#e5b79b"/><ellipse cx="181" cy="288.8" rx="29.6" ry="26.400000000000002" fill="#b8866d" opacity=".35"/><ellipse cx="165.46" cy="266.24" rx="6.29" ry="3.3600000000000003" fill="#1d1412"/><ellipse cx="196.54" cy="266.24" rx="6.29" ry="3.3600000000000003" fill="#1d1412"/><path d="M156.21 258.56Q165.46 254.72 174.71 258.56M187.29 258.56Q196.54 254.72 205.79 258.56" stroke="#2a1c16" stroke-width="3.33" fill="none"/><path d="M166.94 292.16Q181 306.56 195.06 292.16Q181 296.0 166.94 292.16Z" fill="#f4efec" stroke="#8e4a44" stroke-width="2.2199999999999998"/><path d="M178.04 281.6Q181 284.96 184.7 281.6" stroke="#b8866d" stroke-width="2.5900000000000003" fill="none" opacity=".7"/>
<path d="M140 290Q126 210 182 204Q236 210 222 290Q218 238 176 228Q148 240 140 290Z" fill="#c39a5c"/>
<path d="M160 214Q182 198 206 214Q182 222 160 214Z" fill="#7a5a36"/>
<!-- woman 3 -->
<path d="M-62 500L-56 400Q-40 348 2 330L62 336Q98 352 92 400L62 500Z" fill="#141416"/>
<path d="M-16 340L36 346L6 500H-48Z" fill="#e9e9ea"/>
<path d="M10 312H50V350Q30 362 10 350Z" fill="#d3a488"/>
<ellipse cx="31" cy="272" rx="37" ry="48" fill="#e2b396"/><ellipse cx="31" cy="288.8" rx="29.6" ry="26.400000000000002" fill="#b4826b" opacity=".35"/><ellipse cx="15.46" cy="266.24" rx="6.29" ry="3.3600000000000003" fill="#1d1412"/><ellipse cx="46.54" cy="266.24" rx="6.29" ry="3.3600000000000003" fill="#1d1412"/><path d="M6.210000000000001 258.56Q15.46 254.72 24.71 258.56M37.29 258.56Q46.54 254.72 55.79 258.56" stroke="#2a1c16" stroke-width="3.33" fill="none"/><path d="M16.939999999999998 292.16Q31 306.56 45.06 292.16Q31 296.0 16.939999999999998 292.16Z" fill="#f4efec" stroke="#8e4a44" stroke-width="2.2199999999999998"/><path d="M28.04 281.6Q31 284.96 34.7 281.6" stroke="#b4826b" stroke-width="2.5900000000000003" fill="none" opacity=".7"/>
<path d="M-12 292Q-32 196 36 194Q102 200 92 280Q84 236 56 224Q16 218 -12 292Z" fill="#3a1b18"/>
</g>
</g>
<path d="M569.300 311.900H775V314.800Q775 317.600 771 317.600H573.300Q569.300 317.600 569.300 314.800Z" fill="#e4e7ec"/>
<rect x="569.300" y="311.900" width="205.700" height="1.200" fill="#f6f7f9"/>
<path d="M659 311.900H685Q684 313.600 682 313.600H662Q660 313.600 659 311.900Z" fill="#c3c7cd"/>


<g font-family="Liberation Sans" >
<text x="411.5" y="190.5" font-size="16.4" font-weight="700" fill="#e27b35" textLength="15.3" lengthAdjust="spacingAndGlyphs">20</text>
<text x="427" y="190.5" font-size="16.4" fill="#4a8fcb" textLength="23.4" lengthAdjust="spacingAndGlyphs">four</text>
<text x="450.8" y="190.5" font-size="16.4" font-weight="700" fill="#e27b35" textLength="7" lengthAdjust="spacingAndGlyphs">7</text>
<path d="M462 173H467.800V179.500H470L464.900 184.500 459.800 179.500H462Z" fill="#4a4d52"/>
<path d="M456.500 176.300H461L465.200 185 469.300 176.300H473.700L466.300 190.800H464Z" fill="#2f8fd8"/>
<path d="M477.900 173.900L486.600 188.400H481.500L477.900 181.800 474.200 188.400H469.400Z" fill="#2f8fd8"/>
<path d="M477.500 183.500L481 187.500H479.800V192.800H475.200V187.500H474Z" fill="#4a4d52"/>
<circle cx="485.600" cy="173.400" r="1" fill="none" stroke="#666" stroke-width=".4"/>
<text x="411.300" y="201.100" font-size="4.500" font-weight="700" fill="#3c3f44" stroke="#3c3f44" stroke-width=".15" textLength="75.700" lengthAdjust="spacingAndGlyphs">VIRTUAL STAFFING SOLUTIONS</text>
<text x="409.600" y="232.800" font-size="25.400" font-weight="700" fill="#0d2247" stroke="#0d2247" stroke-width=".9" stroke-linejoin="round" textLength="101.900" lengthAdjust="spacingAndGlyphs">Remote</text>
<text x="409.600" y="269.400" font-size="25.400" font-weight="700" fill="#0d2247" stroke="#0d2247" stroke-width=".9" stroke-linejoin="round" textLength="155" lengthAdjust="spacingAndGlyphs">Staffing 101</text>
<text x="408.400" y="287.300" font-size="7.400" fill="#222" textLength="60.500" lengthAdjust="spacingAndGlyphs">By: C. vanVonno</text>
</g>

</svg>
<div class="abs" style="left:196.9px;top:384.5px;width:760.5px;height:76.3px;background:#e9eff8;border-radius:4px 4px 0 0"></div>
<div class="abs" style="left:56.6px;top:458px;width:911px;height:12.5px;background:linear-gradient(rgba(238,240,243,0),rgba(236,238,241,.9) 40%,#e6e8eb)"></div>
<div class="abs" style="left:563px;top:371.6px;width:28px;height:1.3px;background:#6d7175"></div>
<span class="t" style="left:205.50px;top:393.00px;font-size:8.65px;color:#0a0a0a;transform:scaleX(1.0019);">Welcome to Remote Staffing 101!</span>
<span class="t" style="left:205.50px;top:404.00px;font-size:8.65px;color:#0a0a0a;transform:scaleX(0.9974);">-Introduction 1</span>
<span class="t" style="left:205.50px;top:415.00px;font-size:8.65px;color:#0a0a0a;transform:scaleX(0.9974);">-Introduction 2</span>
<svg class="abs" style="left:71.75px;top:444.75px" width="10.5" height="10.5" viewBox="0 0 24 24"><path fill="#444746" d="M3 3v8h8V3H3zm6 6H5V5h4v4zm-6 4v8h8v-8H3zm6 6H5v-4h4v4zm4-16v8h8V3h-8zm6 6h-4V5h4v4zm-6 4v8h8v-8h-8zm6 6h-4v-4h4v4z" /></svg><svg class="abs" style="left:100.15px;top:444.75px" width="10.5" height="10.5" viewBox="0 0 24 24"><path fill="#444746" d="M15.410 7.410L14 6l-6 6 6 6 1.410-1.410L10.830 12z" /></svg>
<div class="abs" style="left:953.2px;top:446.8px;width:16.4px;height:16.4px;border-radius:50%;background:#fff;box-shadow:0 0.5px 2px rgba(0,0,0,.35)"></div>
<svg class="abs" style="left:956.05px;top:450.25px" width="9.5" height="9.5" viewBox="0 0 24 24"><path fill="#444746" d="M15.410 7.410L14 6l-6 6 6 6 1.410-1.410L10.830 12z" /></svg>

</div></div>

<div class="abs" style="left:657.2px;top:69.8px;width:191.3px;height:127px;background:#fff;border-radius:3px;box-shadow:0 1px 3px rgba(60,64,67,.3),0 2px 6px 1px rgba(60,64,67,.15)"></div>
<svg class="abs" style="left:667px;top:84px" width="8" height="8.500" viewBox="0 0 8 8.500"><path d="M1.300 2.700L3.300 0.600L3.800 1.100M0.300 2.900H7.300M0.900 2.900L1.900 5.600H5.700L6.700 2.900M2.700 5.600V7.600H4.900V5.600" fill="none" stroke="#444746" stroke-width=".850" stroke-linejoin="round"/></svg>
<span class="t" style="left:681.80px;top:82.00px;font-size:8.2px;color:#1f1f1f;transform:scaleX(1.0340);-webkit-text-stroke:.1px #1f1f1f;">Presenter view</span>
<span class="t" style="left:681.80px;top:92.00px;font-size:7px;color:#5f6368;transform:scaleX(1.0596);">Start slideshow with speaker notes</span>
<span class="t" style="left:681.80px;top:99.00px;font-size:7px;color:#5f6368;transform:scaleX(1.0261);">and audience Q&amp;A</span>
<svg class="abs" style="left:666px;top:118.700px" width="9.500" height="9.500" viewBox="0 0 9.500 9.500"><rect x="2.400" y="0.800" width="6.200" height="6.200" rx=".8" fill="none" stroke="#444746" stroke-width=".850"/><path d="M0.800 2.600V7.600Q0.800 8.600 1.800 8.600H6.800" fill="none" stroke="#444746" stroke-width=".850"/><path d="M4.700 3.100L5.700 2.500V5.600" fill="none" stroke="#444746" stroke-width=".800"/></svg>
<span class="t" style="left:681.80px;top:120.00px;font-size:8.2px;color:#1f1f1f;transform:scaleX(1.0565);-webkit-text-stroke:.1px #1f1f1f;">Start from beginning</span>
<span class="t" style="left:784.00px;top:120.00px;font-size:8px;color:#5f6368;transform:scaleX(0.9000);">&#8984;</span><span class="t" style="left:791.60px;top:120.00px;font-size:8.2px;color:#5f6368;transform:scaleX(1.0370);">+Shift+Enter</span>
<svg class="abs" style="left:665.25px;top:142.15px" width="10.5" height="10.5" viewBox="0 0 24 24"><path fill="#c4c7c5" d="M21 3H3c-1.100 0-2 .900-2 2v3h2V5h18v14h-7v2h7c1.100 0 2-.900 2-2V5c0-1.100-.900-2-2-2zM1 18v3h3c0-1.660-1.340-3-3-3zm0-4v2c2.760 0 5 2.240 5 5h2c0-3.870-3.130-7-7-7zm0-4v2a9 9 0 0 1 9 9h2c0-6.080-4.930-11-11-11z" /></svg>
<span class="t" style="left:681.80px;top:144.00px;font-size:8.2px;color:#b5b8bb;transform:scaleX(1.0416);">Present using Chromecast</span>
<div class="abs" style="left:657.2px;top:164px;width:191.3px;height:1px;background:#e1e3e6"></div>
<svg class="abs" style="left:665.500px;top:176px" width="10" height="10" viewBox="0 0 10 10"><path d="M3.600 3.300V1.300H9V5.600H7.200M1.400 3.700H6.600V7.300H1.400ZM0.400 8.500H7.600M7.200 7.300H9.200" fill="none" stroke="#444746" stroke-width=".850"/></svg>
<span class="t" style="left:681.80px;top:178.00px;font-size:8.2px;color:#1f1f1f;transform:scaleX(1.0564);-webkit-text-stroke:.1px #1f1f1f;">Presentation display options</span>
<div class="abs" style="left:817.1px;top:176.1px;width:22px;height:9.7px;border-radius:4.85px;background:#f7c42a"></div>
<span class="t" style="left:821.20px;top:179.00px;font-size:6.8px;color:#3a2c00;font-weight:700;transform:scaleX(1.0011);">New</span>
<svg class="abs" style="left:820px;top:64px" width="90" height="42" viewBox="820 64 90 42"><path d="M827.400 85.300L844.700 71.400L846.700 78.200L899.400 75.300L899.700 94.700L847.400 92.700L844.700 99.100Z" fill="#f4720f" stroke="#f4720f" stroke-width="2" stroke-linejoin="round"/></svg>

</div></body></html>
